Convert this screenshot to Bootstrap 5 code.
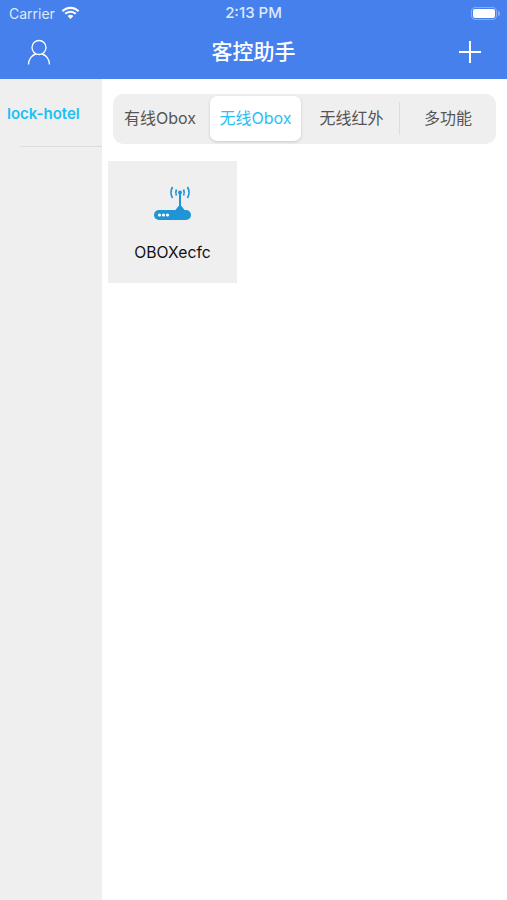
<!DOCTYPE html>
<html lang="zh">
<head>
  <meta charset="UTF-8">
  <title>客控助手</title>
  <meta name="viewport" content="width=device-width, initial-scale=1">
  <link href="https://cdn.jsdelivr.net/npm/bootstrap@5.3.3/dist/css/bootstrap.min.css" rel="stylesheet">
  <style>
    body {
      font-family: Inter, "Noto Sans CJK SC", sans-serif;
      height: 900px;
      overflow: hidden;
      background: #fff;
    }
    .top-head {
      background: #4680ec;
      color: #fff;
      height: 79px;
    }
    .status-row {
      height: 27px;
      padding: 0 7px 1px 9px;
      font-size: 14px;
      color: #dfe9fb;
    }
    .status-time {
      left: 0;
      right: 0;
      margin-top: 1px;
      text-align: center;
      font-size: 15px;
      font-weight: 500;
    }
    .battery-box {
      width: 26px;
      height: 13px;
      border: 1px solid #88adf2;
      border-radius: 4px;
      padding: 1px;
    }
    .battery-box span {
      display: block;
      height: 100%;
      background: #fff;
      border-radius: 2px;
    }
    .battery-tip {
      width: 2px;
      height: 5px;
      margin-left: 1px;
      background: #88adf2;
      border-radius: 0 2px 2px 0;
    }
    .wifi-gap { gap: 6px; }
    .title-row {
      height: 52px;
      padding: 0 26px 2px 27px;
    }
    .app-title {
      left: 0;
      right: 0;
      text-align: center;
      font-size: 21px;
      font-weight: 500;
    }
    .page-body {
      height: 821px;
    }
    .side-list {
      width: 102px;
      background: #efefef;
      flex: none;
    }
    .side-name {
      color: #1cc0f4;
      font-size: 15px;
      font-weight: 600;
      padding: 24px 0 0 7px;
      height: 67px;
      white-space: nowrap;
    }
    .side-line {
      height: 1px;
      margin-left: 20px;
      background: #dcdcdc;
    }
    .tab-wrap {
      margin: 15px 11px 0 11px;
      height: 50px;
      background: #efefef;
      border-radius: 10px;
      padding: 2px 0 3px;
    }
    .tab-item {
      color: #555;
      font-size: 16px;
      height: 45px;
      padding-bottom: 2px;
      white-space: nowrap;
    }
    .tab-on {
      width: 91px;
      margin-left: 3px;
      margin-right: 3px;
      background: #fff;
      color: #28c0f5;
      border-radius: 7px;
      box-shadow: 0 1px 3px rgba(0, 0, 0, .16);
    }
    .tab-first { width: 94px; }
    .tab-third { width: 95px; }
    .tab-last { flex: 1; border-left: 1px solid #dcdcdc; height: 33px; margin-top: 6px; }
    .box-card {
      width: 129px;
      height: 122px;
      margin: 17px 0 0 6px;
      background: #efefef;
      color: #111;
      font-size: 15.7px;
    }
    .box-card svg { margin-top: 25px; }
    .box-name { margin-top: 20px; }
  </style>
</head>
<body>

  <div class="top-head">
    <div class="status-row d-flex align-items-center justify-content-between position-relative">
      <div class="d-flex align-items-center wifi-gap">
        <span>Carrier</span>
        <svg width="19" height="14" viewBox="0 0 19 14" fill="#fff">
          <path d="M9.5 3C12.3 3 14.9 4.1 16.8 6L18.3 4.4C16 2.1 12.9.7 9.5.7S3 2.1.7 4.4L2.2 6C4.1 4.1 6.7 3 9.5 3Z"/>
          <path d="M9.5 6.8C11.2 6.8 12.8 7.5 14 8.6L15.5 7.1C13.9 5.6 11.8 4.7 9.5 4.7S5.1 5.6 3.500 7.1L5 8.6C6.200 7.5 7.800 6.800 9.500 6.800Z"/>
          <path d="M9.5 8.700C8.400 8.700 7.400 9.100 6.600 9.900L9.500 13L12.400 9.900C11.600 9.100 10.600 8.700 9.500 8.700Z"/>
        </svg>
      </div>
      <span class="status-time position-absolute">2:13 PM</span>
      <div class="d-flex align-items-center">
        <div class="battery-box"><span></span></div>
        <div class="battery-tip"></div>
      </div>
    </div>
    <div class="title-row d-flex align-items-center justify-content-between position-relative">
      <svg width="24" height="26" viewBox="0 0 24 26" fill="none" stroke="#fff" stroke-width="1.300">
        <circle cx="12" cy="8.500" r="7"/>
        <path d="M1.500 25.500C1.500 20 5 16 9 15M22.500 25.500C22.500 20 19 16 15 15"/>
      </svg>
      <span class="app-title position-absolute">客控助手</span>
      <svg width="22" height="22" viewBox="0 0 22 22" stroke="#fff" stroke-width="2">
        <path d="M0 11H22M11 0V22"/>
      </svg>
    </div>
  </div>

  <div class="page-body d-flex">
    <div class="side-list">
      <div class="side-name">lock-hotel</div>
      <div class="side-line"></div>
    </div>
    <div class="flex-grow-1">
      <div class="tab-wrap d-flex">
        <div class="tab-item tab-first d-flex align-items-center justify-content-center">有线Obox</div>
        <div class="tab-item tab-on d-flex align-items-center justify-content-center">无线Obox</div>
        <div class="tab-item tab-third d-flex align-items-center justify-content-center">无线红外</div>
        <div class="tab-item tab-last d-flex align-items-center justify-content-center">多功能</div>
      </div>
      <div class="box-card d-flex flex-column align-items-center">
        <svg width="38" height="35" viewBox="0 0 38 35" fill="none" stroke="#1f95d8">
          <rect x="0" y="24" width="37" height="10" rx="5" fill="#1f95d8" stroke="none"/>
          <circle cx="5.500" cy="29" r="1.600" fill="#fff" stroke="none"/>
          <circle cx="9.500" cy="29" r="1.600" fill="#fff" stroke="none"/>
          <circle cx="13.500" cy="29" r="1.600" fill="#fff" stroke="none"/>
          <path d="M26 7V21" stroke-width="2"/>
          <path d="M21.500 24L24.500 20H27.500L30.500 24Z" fill="#1f95d8" stroke="none"/>
          <circle cx="26" cy="6.500" r="2" fill="#1f95d8" stroke="none"/>
          <path d="M22.500 3.500C21.500 5.500 21.500 7.500 22.500 9.500M29.500 3.500C30.500 5.500 30.500 7.500 29.500 9.500" stroke-width="1.700"/>
          <path d="M18.500 1C16.500 4.500 16.500 8.500 18.500 12M33.500 1C35.500 4.500 35.500 8.500 33.500 12" stroke-width="1.700"/>
        </svg>
        <div class="box-name">OBOXecfc</div>
      </div>
    </div>
  </div>

</body>
</html>
